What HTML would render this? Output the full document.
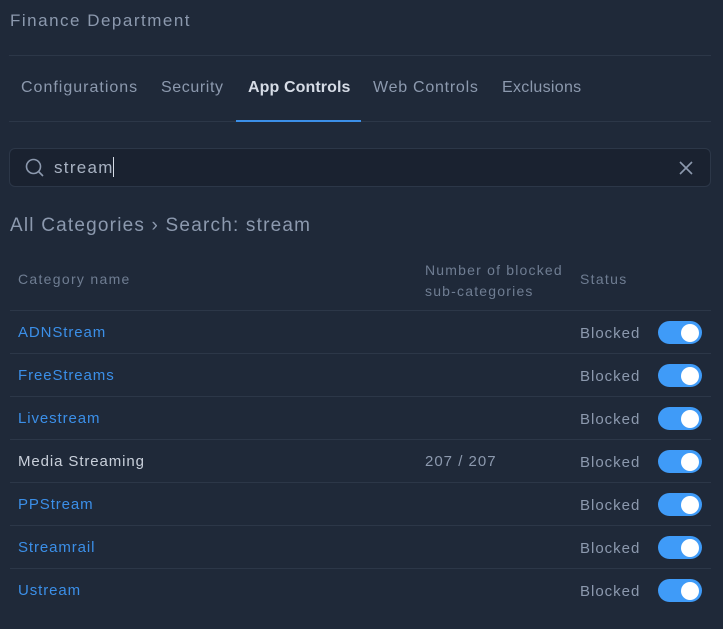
<!DOCTYPE html>
<html><head><style>
*{margin:0;padding:0;box-sizing:border-box}
body{width:723px;height:629px;background:#1f2939;font-family:"Liberation Sans",sans-serif;position:relative;overflow:hidden;color:#8c99ae;letter-spacing:1px}
.a{position:absolute;white-space:nowrap}
.line{position:absolute;height:1px;background:#2c3748}
.tab{position:absolute;top:79px;font-size:16px;color:#8c99ae;letter-spacing:1px}
.row{position:absolute;left:10px;width:701px;height:43px;border-top:1px solid #2c3748}
.row .n{position:absolute;left:8px;top:13px;font-size:15px;color:#3b8fe8;letter-spacing:0.9px}
.row .c{position:absolute;left:415px;top:13px;font-size:15px;color:#8c99ae}
.row .s{position:absolute;left:570px;top:14px;font-size:15px;color:#8c99ae}
.tg{position:absolute;left:648px;top:10px;width:44px;height:23px;border-radius:12px;background:#3f9bf8}
.tg:after{content:"";position:absolute;right:3px;top:2.5px;width:18px;height:18px;border-radius:50%;background:#fff}
</style></head><body>
<div class="a" style="left:10px;top:11px;font-size:17px;color:#8c99ae;letter-spacing:1.5px">Finance Department</div>
<div class="line" style="left:9px;top:55px;width:702px"></div>
<div class="tab" style="left:21px">Configurations</div>
<div class="tab" style="left:161px;letter-spacing:0.6px">Security</div>
<div class="tab" style="left:248px;color:#d6dce6;font-weight:bold;letter-spacing:0.1px">App Controls</div>
<div class="tab" style="left:373px;letter-spacing:0.75px">Web Controls</div>
<div class="tab" style="left:502px;letter-spacing:0.3px">Exclusions</div>
<div class="line" style="left:9px;top:121px;width:702px"></div>
<div class="a" style="left:236px;top:120px;width:125px;height:2px;background:#3b8fe8"></div>
<div class="a" style="left:9px;top:148px;width:702px;height:39px;background:#1a2230;border:1px solid #2c3748;border-radius:6px"></div>
<svg class="a" style="left:24px;top:157px" width="22" height="22" viewBox="0 0 22 22" fill="none" stroke="#8c99ae" stroke-width="1.6"><circle cx="9.5" cy="9.5" r="7"/><path d="M14.5 14.5L19 19"/></svg>
<div class="a" style="left:54px;top:157px;font-size:17px;color:#a8b2c2;letter-spacing:1.3px">stream<span style="display:inline-block;width:1px;height:20px;background:#d6dce6;vertical-align:-4px;margin-left:-1px"></span></div>
<svg class="a" style="left:679px;top:161px" width="14" height="14" viewBox="0 0 14 14" stroke="#8c99ae" stroke-width="1.6"><path d="M1 1L13 13M13 1L1 13"/></svg>
<div class="a" style="left:10px;top:215px;font-size:19px;color:#8c99ae;letter-spacing:1.2px">All Categories › Search: stream</div>
<div class="a" style="left:18px;top:271px;font-size:14px;color:#6f7d92;letter-spacing:1.3px">Category name</div>
<div class="a" style="left:425px;top:260px;font-size:14px;color:#6f7d92;line-height:21px;letter-spacing:1.2px">Number of blocked<br>sub-categories</div>
<div class="a" style="left:580px;top:271px;font-size:14px;color:#6f7d92;letter-spacing:1.3px">Status</div>
<div class="row" style="top:310px"><span class="n">ADNStream</span><span class="s">Blocked</span><span class="tg"></span></div>
<div class="row" style="top:353px"><span class="n">FreeStreams</span><span class="s">Blocked</span><span class="tg"></span></div>
<div class="row" style="top:396px"><span class="n">Livestream</span><span class="s">Blocked</span><span class="tg"></span></div>
<div class="row" style="top:439px"><span class="n" style="color:#c9d0db">Media Streaming</span><span class="c">207 / 207</span><span class="s">Blocked</span><span class="tg"></span></div>
<div class="row" style="top:482px"><span class="n">PPStream</span><span class="s">Blocked</span><span class="tg"></span></div>
<div class="row" style="top:525px"><span class="n">Streamrail</span><span class="s">Blocked</span><span class="tg"></span></div>
<div class="row" style="top:568px"><span class="n">Ustream</span><span class="s">Blocked</span><span class="tg"></span></div>
</body></html>
